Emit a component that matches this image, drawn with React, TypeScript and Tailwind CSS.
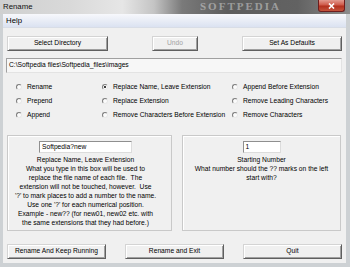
import React from "react";

function Btn({ label, w, disabled }: { label: string; w: string; disabled?: boolean }) {
  return (
    <div
      className={`${w} h-[15px] flex items-center justify-center bg-[#f0f0f0] border border-t-[#d4d4d4] border-l-[#d4d4d4] border-r-[#5f5f5f] border-b-[#5f5f5f] shadow-[inset_1px_1px_0_#ffffff,inset_-1px_-1px_0_#a0a0a0] text-[6.7px] ${
        disabled ? "text-[#a3a3a3]" : "text-black"
      }`}
    >
      {label}
    </div>
  );
}

function Radio({ label, checked }: { label: string; checked?: boolean }) {
  return (
    <div className="flex items-center gap-[5px] h-[14px] whitespace-nowrap">
      <span className="w-[6px] h-[6px] shrink-0 rounded-full border border-t-[#7d7d7d] border-l-[#7d7d7d] border-r-[#e8e8e8] border-b-[#e8e8e8] bg-[#fbfbfb] flex items-center justify-center">
        {checked && <span className="w-[2px] h-[2px] rounded-full bg-black" />}
      </span>
      <span>{label}</span>
    </div>
  );
}

export default function App() {
  const help = [
    "Replace Name, Leave Extension",
    "What you type in this box will be used to",
    "replace the file name of each file.  The",
    "extension will not be touched, however.  Use",
    "'?' to mark places to add a number to the name.",
    "Use one '?' for each numerical position.",
    "Example - new?? (for new01, new02 etc. with",
    "the same extensions that they had before.)",
  ];

  return (
    <div className="w-[350px] h-[267px] overflow-hidden flex flex-col bg-[#5b6058] font-['Liberation_Sans',Arial,sans-serif] text-black">
      {/* title bar */}
      <div className="relative h-[14px] shrink-0 overflow-hidden bg-[linear-gradient(90deg,#cfd0d0_0%,#d9d9d9_20%,#e6e6e6_35%,#c4c4c4_44%,#7a7a7a_52%,#5d5d5d_65%,#626262_85%,#8c8c8c_100%)]">
        <span className="absolute left-[3px] top-[1px] text-[7.8px] text-[#111] leading-[11px]">Rename</span>
        <span className="absolute left-[200px] top-0 text-[11px] leading-[13px] font-bold tracking-[2px] text-white/40 font-['Liberation_Serif',serif]">
          SOFTPEDIA
        </span>
        <div className="absolute left-[318px] top-0 w-[27px] h-[12px] rounded-b-[3px] border border-t-0 border-[#6e1d1d] bg-[linear-gradient(180deg,#e29a8f_0%,#cf5a4a_45%,#b3301e_55%,#c4533c_100%)] flex items-center justify-center">
          <svg width="7" height="6" viewBox="0 0 7 6">
            <path d="M1 0.5 L6 5.5 M6 0.5 L1 5.5" stroke="white" strokeWidth="1.6" />
          </svg>
        </div>
      </div>

      {/* frame */}
      <div className="flex-1 flex flex-col pl-[3px] pr-[4px] pb-[4px] bg-[#cdd1d4]">
        {/* menu */}
        <div className="h-[14px] shrink-0 flex items-center px-[3px] bg-[linear-gradient(180deg,#f7f8fc_0%,#e9edf6_50%,#dbe2f1_100%)] border-b border-[#d8dde6]">
          <span className="text-[7.8px]">Help</span>
        </div>

        {/* client */}
        <div className="flex-1 flex flex-col bg-[#f0f0f0] text-[6.7px]">
          <div className="mt-[8px] px-[4px] flex justify-between">
            <Btn label="Select Directory" w="w-[101px]" />
            <Btn label="Undo" w="w-[46px]" disabled />
            <Btn label="Set As Defaults" w="w-[100px]" />
          </div>

          <div className="mt-[7px] ml-[3px] mr-[4px] h-[15px] flex items-center px-[2px] bg-[#f7f7f7] border border-t-[#a0a0a0] border-l-[#a0a0a0] border-r-[#e3e3e3] border-b-[#e3e3e3]">
            C:\Softpedia files\Softpedia_files\images
          </div>

          <div className="mt-[7px] pl-[13px] grid grid-cols-[86px_130px_1fr]">
            <Radio label="Rename" />
            <Radio label="Replace Name, Leave Extension" checked />
            <Radio label="Append Before Extension" />
            <Radio label="Prepend" />
            <Radio label="Replace Extension" />
            <Radio label="Remove Leading Characters" />
            <Radio label="Append" />
            <Radio label="Remove Characters Before Extension" />
            <Radio label="Remove Characters" />
          </div>

          <div className="mt-[13px] ml-[4px] mr-[5px] flex justify-between">
            <div className="w-[165px] h-[96px] border border-[#c9c9c9] shadow-[inset_1px_1px_0_#ffffff] flex flex-col items-center pt-[5px] pr-[8px]">
              <div className="w-[93px] h-[12px] flex items-center px-[2px] bg-white border border-t-[#8f8f8f] border-l-[#8f8f8f] border-r-[#dcdcdc] border-b-[#dcdcdc]">
                Softpedia?new
              </div>
              <div className="mt-[2px] text-center leading-[9px] whitespace-pre">
                {help.map((l) => (
                  <div key={l}>{l}</div>
                ))}
              </div>
            </div>
            <div className="w-[159px] h-[96px] border border-[#c9c9c9] shadow-[inset_1px_1px_0_#ffffff] flex flex-col items-center pt-[5px]">
              <div className="w-[38px] h-[12px] flex items-center px-[2px] bg-white border border-t-[#8f8f8f] border-l-[#8f8f8f] border-r-[#dcdcdc] border-b-[#dcdcdc]">
                1
              </div>
              <div className="mt-[2px] text-center leading-[9px]">
                <div>Starting Number</div>
                <div>What number should the ?? marks on the left</div>
                <div>start with?</div>
              </div>
            </div>
          </div>

          <div className="mt-[13px] px-[4px] flex justify-between">
            <Btn label="Rename And Keep Running" w="w-[99px]" />
            <Btn label="Rename and Exit" w="w-[99px]" />
            <Btn label="Quit" w="w-[99px]" />
          </div>
        </div>
      </div>
    </div>
  );
}
